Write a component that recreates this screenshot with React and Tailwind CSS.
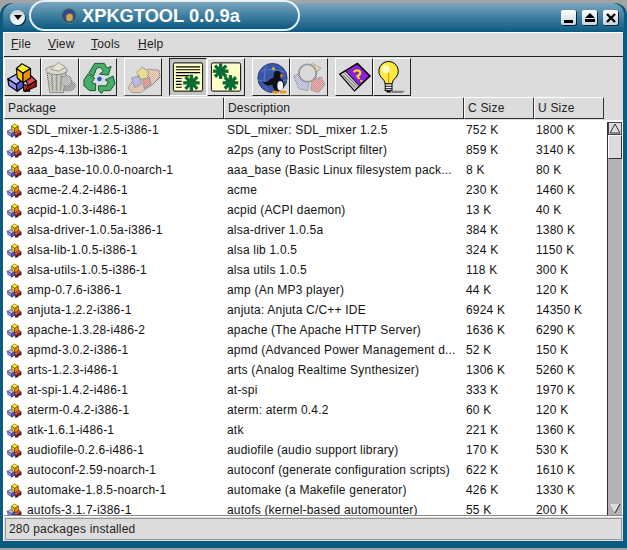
const rows = [
  ["SDL_mixer-1.2.5-i386-1", "SDL_mixer: SDL_mixer 1.2.5", "752 K", "1800 K"],
  ["a2ps-4.13b-i386-1", "a2ps (any to PostScript filter)", "859 K", "3140 K"],
  ["aaa_base-10.0.0-noarch-1", "aaa_base (Basic Linux filesystem pack...", "8 K", "80 K"],
  ["acme-2.4.2-i486-1", "acme", "230 K", "1460 K"],
  ["acpid-1.0.3-i486-1", "acpid (ACPI daemon)", "13 K", "40 K"],
  ["alsa-driver-1.0.5a-i386-1", "alsa-driver 1.0.5a", "384 K", "1380 K"],
  ["alsa-lib-1.0.5-i386-1", "alsa lib 1.0.5", "324 K", "1150 K"],
  ["alsa-utils-1.0.5-i386-1", "alsa utils 1.0.5", "118 K", "300 K"],
  ["amp-0.7.6-i386-1", "amp (An MP3 player)", "44 K", "120 K"],
  ["anjuta-1.2.2-i386-1", "anjuta: Anjuta C/C++ IDE", "6924 K", "14350 K"],
  ["apache-1.3.28-i486-2", "apache (The Apache HTTP Server)", "1636 K", "6290 K"],
  ["apmd-3.0.2-i386-1", "apmd (Advanced Power Management d...", "52 K", "150 K"],
  ["arts-1.2.3-i486-1", "arts (Analog Realtime Synthesizer)", "1306 K", "5260 K"],
  ["at-spi-1.4.2-i486-1", "at-spi", "333 K", "1970 K"],
  ["aterm-0.4.2-i386-1", "aterm: aterm 0.4.2", "60 K", "120 K"],
  ["atk-1.6.1-i486-1", "atk", "221 K", "1360 K"],
  ["audiofile-0.2.6-i486-1", "audiofile (audio support library)", "170 K", "530 K"],
  ["autoconf-2.59-noarch-1", "autoconf (generate configuration scripts)", "622 K", "1610 K"],
  ["automake-1.8.5-noarch-1", "automake (a Makefile generator)", "426 K", "1330 K"],
  ["autofs-3.1.7-i386-1", "autofs (kernel-based automounter)", "55 K", "200 K"],
];

function Cubes({ className = "w-[37px] h-[37px]", sw = 1.2 }) {
  return (
    <svg viewBox="0 0 37 37" className={className}>
      <g stroke="#000" strokeWidth={sw} strokeLinejoin="round">
        <polygon points="3,20 12,15 19,20 12,26" fill="#b8b8ff" />
        <polygon points="3,20 12,26 13,33 4,27" fill="#9090f8" />
        <polygon points="12,26 19,20 20,28 13,33" fill="#5858d0" />
        <polygon points="21,21 28,17 33,22 25,27" fill="#e05050" />
        <polygon points="19,26 25,27 26,33 20,33" fill="#c82828" />
        <polygon points="25,27 33,22 33,28 21,33" fill="#a01818" />
        <polygon points="12,9 18,4 27,9 19,14" fill="#ffee20" />
        <polygon points="12,9 19,14 19,24 13,19" fill="#ffc800" />
        <polygon points="19,14 27,9 27,19 19,24" fill="#f09000" />
      </g>
    </svg>
  );
}

function Dither({ fine }) {
  return (
    <>
      <defs>
        <pattern id="dith" width="2" height="2" patternUnits="userSpaceOnUse">
          <rect width="1" height="1" fill="#dcdcdc" />
          <rect x="1" y="1" width="1" height="1" fill="#dcdcdc" />
        </pattern>
      </defs>
      <rect width="37" height="37" fill="url(#dith)" />
    </>
  );
}

function Trash() {
  return (
    <svg viewBox="0 0 37 37" className="w-[37px] h-[37px]">
      <ellipse cx="26" cy="27" rx="9" ry="6" fill="#707070" />
      <polygon points="5,12 25,12 22,34 8,34" fill="#b8b8a0" stroke="#333" />
      <path d="M10 15 L11 32 M15 15 L15 32 M20 15 L19 32" stroke="#555" strokeWidth="1.6" />
      <ellipse cx="15" cy="11" rx="11" ry="4.5" fill="#d8d8c0" stroke="#333" />
      <polygon points="9,10 17,3 24,8 17,12" fill="#f0ecc8" stroke="#555" />
      <circle cx="25" cy="22" r="5.5" fill="#a0a0a0" stroke="#444" />
      <Dither />
    </svg>
  );
}

function Recycle() {
  return (
    <svg viewBox="0 0 37 37" className="w-[37px] h-[37px]">
      <g fill="#45ad68" stroke="#0f5a2c" strokeWidth="1" strokeLinejoin="round">
        <path d="M9 14 L15 4 L25 4 L28 9 L32 7 L29 16 L20 15 L24 12 L21 8 L17 9 L14 17 Z" />
        <path d="M4 21 L8 15 L15 19 L12 24 L16 25 L16 32 L10 32 L4 27 Z" />
        <path d="M19 32 L19 27 L27 27 L29 23 L26 21 L34 17 L36 25 L31 32 L24 32 L22 35 Z" />
      </g>
      <circle cx="20" cy="20" r="3" fill="#3a50d0" stroke="#dff" />
    </svg>
  );
}

function HandCubes() {
  return (
    <svg viewBox="0 0 37 37" className="w-[37px] h-[37px]">
      <path d="M3 29 L10 19 L24 10 L35 11 L36 18 L28 26 L16 34 L7 34 Z" fill="#e8b088" stroke="#555" />
      <polygon points="12,13 18,8 24,12 23,20 16,20" fill="#f8e040" stroke="#555" />
      <polygon points="7,19 14,17 17,25 10,29" fill="#9898f0" stroke="#555" />
      <polygon points="18,21 25,18 27,26 20,30" fill="#d85858" stroke="#555" />
      <Dither />
    </svg>
  );
}

function Gear({ cx, cy, r = 7 }) {
  return (
    <g stroke="#0b6b33" strokeWidth="3.4">
      <line x1={cx - r} y1={cy} x2={cx + r} y2={cy} />
      <line x1={cx} y1={cy - r} x2={cx} y2={cy + r} />
      <line x1={cx - r * 0.72} y1={cy - r * 0.72} x2={cx + r * 0.72} y2={cy + r * 0.72} />
      <line x1={cx - r * 0.72} y1={cy + r * 0.72} x2={cx + r * 0.72} y2={cy - r * 0.72} />
      <circle cx={cx} cy={cy} r={r * 0.55} fill="#0b6b33" stroke="none" />
    </g>
  );
}

function DocGear() {
  return (
    <svg viewBox="0 0 37 37" className="w-[37px] h-[37px]">
      <rect x="3.5" y="3.5" width="30" height="29" rx="1.5" fill="#ffffc8" stroke="#000" />
      <path d="M6 7.5H31M6 10.5H31M6 13.5H31M6 16.5H20M6 19.5H12M6 22.5H12M6 25.5H12M6 28.5H12" stroke="#000" strokeWidth="1.2" />
      <Gear cx={22} cy={24} r={8.5} />
    </svg>
  );
}

function Gears() {
  return (
    <svg viewBox="0 0 37 37" className="w-[37px] h-[37px]">
      <rect x="3.5" y="3.5" width="30" height="29" rx="1.5" fill="#ffffc8" stroke="#000" />
      <Gear cx={13} cy={12} r={8} />
      <Gear cx={23} cy={24} r={8} />
    </svg>
  );
}

function Tux() {
  return (
    <svg viewBox="0 0 37 37" className="w-[37px] h-[37px]">
      <circle cx="20" cy="19" r="15" fill="#3d57a8" stroke="#2a3a78" />
      <path d="M8 12 Q20 8 32 13 M5 21 Q18 25 35 21 M14 5 Q9 19 15 33" stroke="#5a78c8" fill="none" />
      <path d="M9 22 Q14 25 18 20 L22 18 L26 22 L20 26 L14 27 Z" fill="#101018" />
      <ellipse cx="25" cy="16" rx="4" ry="4.5" fill="#101018" />
      <ellipse cx="26" cy="26" rx="6" ry="7" fill="#101018" />
      <ellipse cx="28" cy="27" rx="3" ry="5" fill="#f0f0f0" />
      <polygon points="28,15 32,17 28,18" fill="#f08000" />
      <ellipse cx="23" cy="33.5" rx="3.5" ry="1.5" fill="#f09000" />
      <ellipse cx="31" cy="33.5" rx="3.5" ry="1.5" fill="#f09000" />
      <rect x="20" y="8" width="2" height="3" fill="#f0d000" />
    </svg>
  );
}

function Magnify() {
  return (
    <svg viewBox="0 0 37 37" className="w-[37px] h-[37px]">
      <polygon points="14,10 22,4 31,9 25,14" fill="#f8e060" stroke="#666" />
      <polygon points="3,17 12,13 19,22 17,32 8,30" fill="#a8a8f0" stroke="#666" />
      <polygon points="22,21 31,18 35,26 28,34 20,31" fill="#e06868" stroke="#666" />
      <circle cx="17" cy="14" r="9" fill="#d8d8d8" stroke="#555" strokeWidth="2" />
      <Dither />
    </svg>
  );
}

function Book() {
  return (
    <svg viewBox="0 0 37 37" className="w-[37px] h-[37px]">
      <polygon points="4,15 22,4 35,17 19,32" fill="#8a20d8" stroke="#000" strokeWidth="1.5" />
      <polygon points="4,15 10,12 24,27 19,32" fill="#c8c8c8" stroke="#000" />
      <path d="M7 16 L20 29 M9 14.5 L22 27.5" stroke="#666" />
      <path d="M18 13 Q22 9 25 13 Q25 16 22 17 L24 20" stroke="#ffe800" strokeWidth="2" fill="none" />
      <rect x="25" y="21" width="2" height="2" fill="#ffe800" />
    </svg>
  );
}

function Bulb() {
  return (
    <svg viewBox="0 0 37 37" className="w-[37px] h-[37px]">
      <polygon points="19,32 32,32 29,34.5 17,34.5" fill="#808080" />
      <path d="M11.5 25 Q11 21 7 18 A10 10 0 1 1 23 18 Q19 21 18.500 25 Z" fill="#ffe840" stroke="#000" />
      <circle cx="12" cy="10" r="4" fill="#ffffc0" />
      <path d="M15 14 V25" stroke="#e08000" />
      <rect x="11.500" y="25" width="7" height="7" fill="#fff" stroke="#000" />
      <path d="M11.500 27.500H18.500M11.500 30H18.500" stroke="#000" />
      <rect x="13" y="32" width="4" height="2" fill="#000" />
    </svg>
  );
}

function ToolBtn({ children, pressed, className = "w-[38px]" }) {
  return (
    <div
      className={`flex h-[38px] shrink-0 items-center justify-center border ${
        pressed
          ? "border-t-[#222] border-l-[#222] border-b-white border-r-white bg-[#c4c4c4]"
          : "border-t-white border-l-white border-b-[#222] border-r-[#222] bg-[#dcdcdc]"
      } ${className}`}
    >
      {children}
    </div>
  );
}

function Head({ w, children }) {
  return (
    <div className={`flex h-[22px] shrink-0 items-center border border-t-white border-l-white border-b-[#333] border-r-[#333] bg-[#dcdcdc] pl-[3px] text-[#222] ${w}`}>
      {children}
    </div>
  );
}

function WinBtn({ children }) {
  return (
    <div className="flex h-[15px] w-[15px] items-center justify-center rounded-[2px] bg-gradient-to-b from-white to-[#c8d4dc] shadow-[1px_1px_0_#123]">
      {children}
    </div>
  );
}

function Menu({ first, rest }) {
  return (
    <span>
      <span className="underline">{first}</span>
      {rest}
    </span>
  );
}

export default function App() {
  return (
    <div className="flex h-[550px] w-[627px] flex-col overflow-hidden bg-[#a4a4a4] pb-[2px] pt-[3px] font-['Liberation_Sans',Arial,sans-serif] text-[12px] tracking-[0.2px] text-black">
      <div className="relative flex h-full flex-col rounded-t-[12px] bg-[#0c5a80] pb-[7px] pl-[3px] pr-[4px]">
        <div className="-mr-[1px] flex h-[29px] shrink-0 items-center justify-between rounded-t-[12px] bg-gradient-to-b from-[#7ba6bf] via-[#3d7f9f] to-[#075a82] pl-[7px] pr-[6px]">
          <div className="flex h-[15px] w-[15px] items-center justify-center rounded-full bg-gradient-to-b from-[#c8d4dc] to-white shadow-[1px_1px_0_#123]">
            <div className="h-0 w-0 border-x-[4px] border-t-[5px] border-x-transparent border-t-black" />
          </div>
          <div className="flex gap-[6px]">
            <WinBtn><div className="mt-[7px] h-[3px] w-[9px] bg-black" /></WinBtn>
            <WinBtn>
              <div className="flex flex-col items-center gap-[1px]">
                <div className="h-0 w-0 border-x-[5px] border-b-[5px] border-x-transparent border-b-black" />
                <div className="h-[3px] w-[10px] bg-black" />
              </div>
            </WinBtn>
            <WinBtn>
              <svg viewBox="0 0 10 10" className="h-[10px] w-[10px]"><path d="M1 1L9 9M9 1L1 9" stroke="#000" strokeWidth="2.4" /></svg>
            </WinBtn>
          </div>
        </div>

        <div className="absolute left-[29px] top-[-3px] flex h-[31px] w-[271px] items-center rounded-full border-2 border-[#e8f0f4] bg-gradient-to-b from-[#7ba6bf] via-[#3d7f9f] to-[#075a82] pl-[30px]">
          <svg viewBox="0 0 16 16" className="mr-[5px] h-[16px] w-[16px]">
            <circle cx="8" cy="8" r="7.5" fill="#39458f" stroke="#3f8f5f" />
            <polygon points="5,7 9,5 12,7 12,12 8,14 5,12" fill="#c8a860" stroke="#5a4a20" strokeWidth="0.6" />
          </svg>
          <span className="text-[18.3px] font-bold tracking-normal text-white">XPKGTOOL 0.0.9a</span>
        </div>

        <div className="flex min-h-0 flex-1 flex-col border-l border-l-white bg-[#dcdcdc]">
          <div className="flex h-[25px] shrink-0 items-center border-t border-t-white border-b border-b-[#222] pb-[1px] pl-[7px] text-[#222]">
            <span className="w-[37px]"><Menu first="F" rest="ile" /></span>
            <span className="w-[43px]"><Menu first="V" rest="iew" /></span>
            <span className="w-[47px]"><Menu first="T" rest="ools" /></span>
            <span><Menu first="H" rest="elp" /></span>
          </div>

          <div className="mt-[1px] flex h-[38px] shrink-0 items-center">
            <ToolBtn className="w-[37px]"><Cubes /></ToolBtn>
            <ToolBtn><Trash /></ToolBtn>
            <ToolBtn><Recycle /></ToolBtn>
            <ToolBtn className="ml-[7px] w-[38px]"><HandCubes /></ToolBtn>
            <ToolBtn pressed className="ml-[7px] w-[38px]"><DocGear /></ToolBtn>
            <ToolBtn><Gears /></ToolBtn>
            <ToolBtn className="ml-[7px] w-[38px]"><Tux /></ToolBtn>
            <ToolBtn><Magnify /></ToolBtn>
            <ToolBtn className="ml-[7px] w-[38px]"><Book /></ToolBtn>
            <ToolBtn><Bulb /></ToolBtn>
          </div>

          <div className="mt-[1px] flex h-[22px] shrink-0">
            <Head w="w-[220px]">Package</Head>
            <Head w="w-[240px]">Description</Head>
            <Head w="w-[70px]">C Size</Head>
            <Head w="w-[70px]">U Size</Head>
          </div>

          <div className="mt-[1px] flex min-h-0 flex-1 overflow-hidden border-b border-b-[#888] bg-white">
            <div className="min-w-0 flex-1 overflow-hidden">
              {rows.map((r) => (
                <div key={r[0]} className="grid h-[20px] grid-cols-[220px_240px_70px_70px] items-center whitespace-nowrap text-[#111]">
                  <div className="flex items-center">
                    <div className="ml-[2px] mr-[4px] h-[17px] w-[17px]"><Cubes className="h-[17px] w-[17px]" sw={0.9} /></div>
                    <span>{r[0]}</span>
                  </div>
                  <div className="pl-[3px]">{r[1]}</div>
                  <div className="pl-[2px]">{r[2]}</div>
                  <div className="pl-[2px]">{r[3]}</div>
                </div>
              ))}
            </div>
            <div className="mr-[1px] mt-[2px] flex w-[15px] shrink-0 flex-col border-l border-l-[#333] bg-[#b2b2b2]">
              <div className="flex h-[13px] shrink-0 items-center justify-center border border-[#444] bg-[#dcdcdc]">
                <svg viewBox="0 0 12 11" className="h-[11px] w-[12px]"><path d="M6 1L11 10H1Z" fill="#dcdcdc" stroke="#333" /></svg>
              </div>
              <div className="h-[24px] shrink-0 border border-t-white border-l-white border-b-[#333] border-r-[#333] bg-[#dcdcdc]" />
              <div className="flex-1" />
              <div className="flex h-[13px] shrink-0 items-center justify-center">
                <svg viewBox="0 0 12 11" className="h-[11px] w-[12px]"><path d="M1 1H11L6 10Z" fill="#dcdcdc" /><path d="M11 1L6 10" stroke="#222" /></svg>
              </div>
            </div>
          </div>

          <div className="flex h-[25px] shrink-0 items-start border-t border-t-white px-[1px] pt-[1px]">
            <div className="flex h-[22px] w-full items-center border border-[#999] pl-[3px] text-[#222]">280 packages installed</div>
          </div>
        </div>
      </div>
    </div>
  );
}
